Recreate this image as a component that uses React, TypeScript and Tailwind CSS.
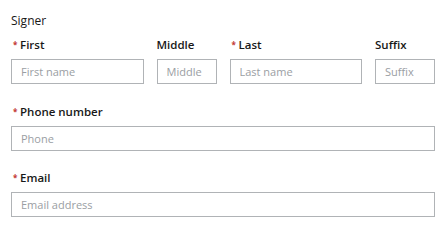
import React from 'react';

const font = { fontFamily: '"Open Sans", "Noto Sans", Arial, sans-serif' };

const Label = ({ text, required }: { text: string; required?: boolean }) => (
    <div className="flex items-center h-4 text-[11.5px] font-semibold text-[#181818] leading-4">
        {required && <span className="text-[#c23934] text-[8px] font-bold w-[9px] pl-[2px] -mt-[1px]">*</span>}
        <span>{text}</span>
    </div>
);

const Field = ({ placeholder }: { placeholder: string }) => (
    <input
        placeholder={placeholder}
        className="mt-[6px] h-[25px] w-full border border-[#b0b3b6] bg-white px-[9px] text-[11px] text-[#333] placeholder:text-[#9a9ea3] outline-none rounded-none"
        style={font}
    />
);

export default function App() {
    return (
        <div className="w-[448px] h-[229px] bg-white pl-[11px] pr-[13px] pt-[13px]" style={font}>
            <div className="h-4 text-[12px] leading-4 font-medium text-[#181818]">Signer</div>

            <div className="mt-[8px] grid grid-cols-[1fr_60px_1fr_60px] gap-x-[13px]">
                <div>
                    <Label text="First" required />
                    <Field placeholder="First name" />
                </div>
                <div>
                    <Label text="Middle" />
                    <Field placeholder="Middle" />
                </div>
                <div>
                    <Label text="Last" required />
                    <Field placeholder="Last name" />
                </div>
                <div>
                    <Label text="Suffix" />
                    <Field placeholder="Suffix" />
                </div>
            </div>

            <div className="mt-[20px]">
                <Label text="Phone number" required />
                <Field placeholder="Phone" />
            </div>

            <div className="mt-[19px]">
                <Label text="Email" required />
                <Field placeholder="Email address" />
            </div>
        </div>
    );
}
